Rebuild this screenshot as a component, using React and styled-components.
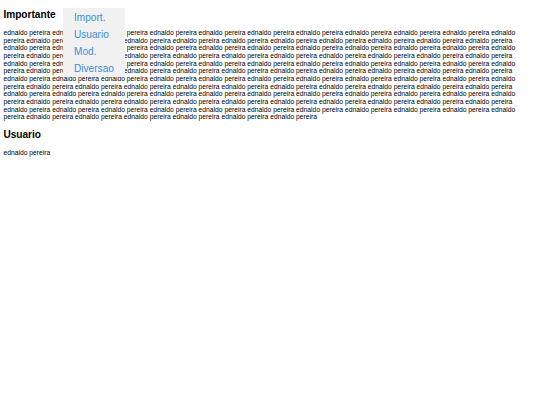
import React from 'react'
import styled, { createGlobalStyle } from 'styled-components'

const GlobalStyle = createGlobalStyle`
  html, body {
    margin: 0;
    padding: 0;
    background: #fff;
  }
  body {
    font-family: 'Liberation Sans', Arial, sans-serif;
    color: #000;
  }
`

const Page = styled.div`
  position: relative;
  padding: 9px 3.4px 0;
  max-width: 524px;
`

const Title = styled.h2`
  font-size: 10.125px;
  line-height: 11.6px;
  font-weight: bold;
  margin: 0 0 8.5px;
`

const Text = styled.p`
  font-size: 6.75px;
  line-height: 7.65px;
  margin: 0 0 8.2px;
`

const Menu = styled.ul`
  position: absolute;
  top: 8px;
  left: 63px;
  width: 62px;
  margin: 0;
  padding: 0;
  list-style: none;
  background: #f1f1f1;
`

const MenuItem = styled.li`
  a {
    display: block;
    height: 17.25px;
    box-sizing: border-box;
    padding: 3.6px 0 0 11px;
    font-size: 10.125px;
    line-height: 11.6px;
    color: #3b8ed9;
    text-decoration: none;
    white-space: nowrap;
  }
`

const items = ['Import.', 'Usuario', 'Mod.', 'Diversao']

export default function App() {
  const lorem = Array(122).fill('ednaldo pereira').join(' ')

  return (
    <>
      <GlobalStyle />
      <Page>
        <Title>Importante</Title>
        <Text>{lorem}</Text>
        <Title>Usuario</Title>
        <Text>ednaldo pereira</Text>
        <Menu>
          {
            items.map(item =>
              <MenuItem key={item}>
                <a href='#'>{item}</a>
              </MenuItem>
            )
          }
        </Menu>
      </Page>
    </>
  )
}
